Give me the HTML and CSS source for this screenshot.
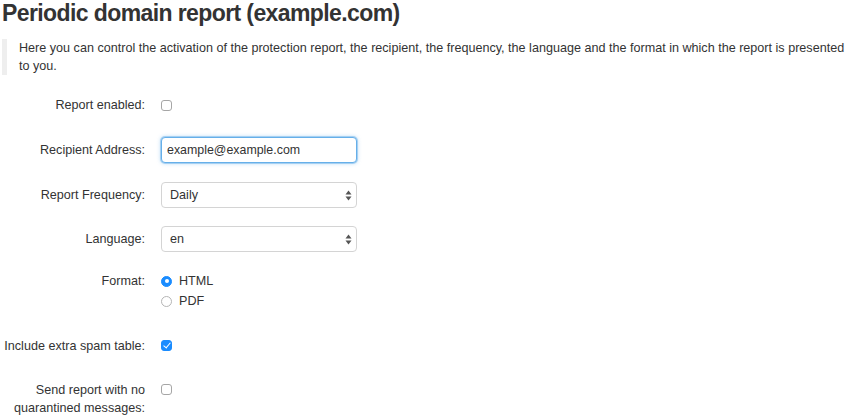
FILE: index.html
```html
<!DOCTYPE html>
<html lang="en">
<head>
<meta charset="utf-8">
<title>Periodic domain report</title>
<link rel="stylesheet" href="styles.css">
</head>
<body>
<div class="page">
  <h1 class="title">Periodic domain report (example.com)</h1>
  <blockquote class="intro">Here you can control the activation of the protection report, the recipient, the frequency, the language and the format in which the report is presented to you.</blockquote>

  <form class="form">
    <div class="row row-check">
      <label class="label" for="enabled">Report enabled:</label>
      <div class="control"><input type="checkbox" id="enabled" class="check"></div>
    </div>

    <div class="row">
      <label class="label" for="recipient">Recipient Address:</label>
      <div class="control"><input type="text" id="recipient" class="text-input" value="example@example.com"></div>
    </div>

    <div class="row row-tight">
      <label class="label" for="freq">Report Frequency:</label>
      <div class="control">
        <span class="select-wrap">
          <select id="freq" class="select"><option>Daily</option><option>Weekly</option><option>Monthly</option></select>
          <svg class="arrows" width="7" height="11" viewBox="0 0 7 11"><path d="M3.5 0.5 L6.5 4.5 L0.5 4.5 Z M3.5 10.5 L6.5 6.5 L0.5 6.5 Z" fill="#555"/></svg>
        </span>
      </div>
    </div>

    <div class="row">
      <label class="label" for="lang">Language:</label>
      <div class="control">
        <span class="select-wrap">
          <select id="lang" class="select"><option>en</option><option>de</option><option>fr</option></select>
          <svg class="arrows" width="7" height="11" viewBox="0 0 7 11"><path d="M3.5 0.5 L6.5 4.5 L0.5 4.5 Z M3.5 10.5 L6.5 6.5 L0.5 6.5 Z" fill="#555"/></svg>
        </span>
      </div>
    </div>

    <div class="row row-format">
      <span class="label">Format:</span>
      <div class="control radios">
        <label class="radio-line"><input type="radio" name="format" class="radio" checked> HTML</label>
        <label class="radio-line"><input type="radio" name="format" class="radio"> PDF</label>
      </div>
    </div>

    <div class="row row-check2">
      <label class="label" for="spam">Include extra spam table:</label>
      <div class="control"><input type="checkbox" id="spam" class="check" checked></div>
    </div>

    <div class="row row-check2">
      <label class="label" for="noq">Send report with no quarantined messages:</label>
      <div class="control"><input type="checkbox" id="noq" class="check"></div>
    </div>
  </form>
</div>
</body>
</html>
```

FILE: styles.css
```css
* { box-sizing: border-box; }

html, body {
  margin: 0;
  padding: 0;
  background: #fff;
}

body {
  font-family: "Liberation Sans", Arial, Helvetica, sans-serif;
  font-size: 12.6px;
  line-height: 18px;
  color: #333;
}

.page {
  padding: 0 2px;
}

.title {
  margin: 0;
  font-size: 23px;
  line-height: 26px;
  letter-spacing: -0.6px;
  font-weight: bold;
  color: #333;
}

.intro {
  margin: 13px 0 0 0;
  padding: 0 0 0 12px;
  border-left: 5px solid #eee;
  font-size: 12.6px;
  line-height: 18px;
}

.form {
  margin-top: 17px;
}

.row {
  display: flex;
  align-items: flex-start;
  min-height: 26px;
  margin-bottom: 19px;
}

.row-tight {
  margin-bottom: 18px;
}

.label {
  width: 143px;
  flex: 0 0 143px;
  text-align: right;
  padding-top: 4px;
  font-weight: normal;
}

.control {
  margin-left: 16px;
}

.check {
  -webkit-appearance: none;
  appearance: none;
  width: 11px;
  height: 11px;
  margin: 7px 0 0 0;
  border: 1px solid #a6a6a6;
  border-radius: 3px;
  background: #fff;
  display: block;
  position: relative;
}

.check:checked {
  background: #1a8cff;
  border-color: #1a8cff;
}

.check:checked::after {
  content: "";
  position: absolute;
  left: 3px;
  top: 0px;
  width: 3px;
  height: 6px;
  border: solid #fff;
  border-width: 0 1.5px 1.5px 0;
  transform: rotate(40deg);
}

.text-input {
  width: 196px;
  height: 26px;
  margin: 0;
  padding: 0 5px;
  font-family: inherit;
  font-size: 12.4px;
  color: #333;
  border: 1px solid #66afe9;
  border-radius: 4px;
  box-shadow: 0 0 0 1px rgba(102, 175, 233, 0.45), 0 0 4px rgba(102, 175, 233, 0.6);
  outline: none;
  background: #fff;
}

.select-wrap {
  position: relative;
  display: block;
  width: 196px;
}

.select {
  -webkit-appearance: none;
  appearance: none;
  width: 196px;
  height: 26px;
  margin: 0;
  padding: 0 20px 0 8px;
  font-family: inherit;
  font-size: 12.6px;
  color: #333;
  background: #fff;
  border: 1px solid #d4d4d4;
  border-radius: 4px;
  outline: none;
}

.arrows {
  position: absolute;
  right: 5px;
  top: 8px;
  pointer-events: none;
}

.row-format {
  margin-bottom: 19px;
}

.row-format .label {
  padding-top: 1px;
}

.radios {
  display: flex;
  flex-direction: column;
}

.radio-line {
  display: flex;
  align-items: center;
  height: 20px;
  gap: 7px;
}

.radio {
  -webkit-appearance: none;
  appearance: none;
  width: 11px;
  height: 11px;
  margin: 0;
  border: 1px solid #b5b5b5;
  border-radius: 50%;
  background: #fff;
  position: relative;
}

.radio:checked {
  background: #1a8cff;
  border-color: #1a8cff;
}

.radio:checked::after {
  content: "";
  position: absolute;
  left: 2.5px;
  top: 2.5px;
  width: 4px;
  height: 4px;
  border-radius: 50%;
  background: #fff;
}

.row-check .check {
  margin-top: 8px;
}

.row-check2 {
  margin-bottom: 18px;
}

.row-check2 .label {
  padding-top: 7px;
}

.row-check2 .check {
  margin-top: 10px;
}
```
